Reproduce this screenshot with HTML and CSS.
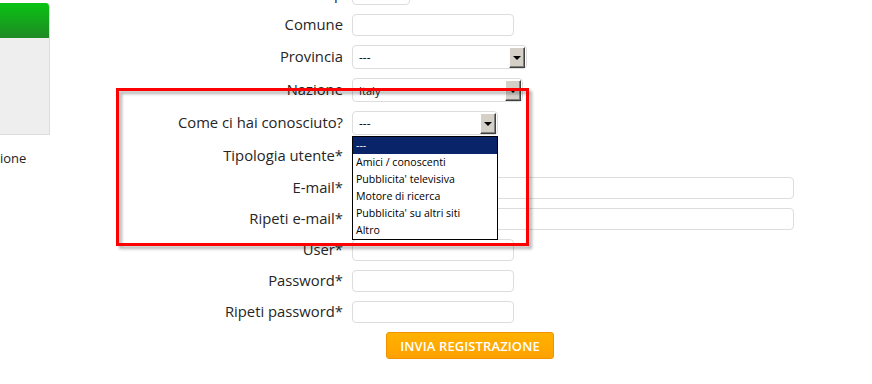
FILE: index.html
```html
<!DOCTYPE html>
<html lang="it">
<head>
  <meta charset="UTF-8" />
  <title>Registrazione</title>
  <link rel="stylesheet" href="styles.css">
</head>
<body>
  <div class="page">
    <aside class="side">
      <div class="side-box">
        <div class="side-head"></div>
        <div class="side-body"></div>
      </div>
      <p class="side-text">ione</p>
    </aside>

    <form class="reg">
      <label>Cap</label>
      <div class="field field-cap"></div>

      <label>Comune</label>
      <div class="field"></div>

      <label>Provincia</label>
      <div class="select select-wide"><span class="select-val">---</span><span class="arrow"></span></div>

      <label>Nazione</label>
      <div class="select select-nation"><span class="select-val small">Italy</span><span class="arrow"></span></div>

      <label>Come ci hai conosciuto?</label>
      <div class="select select-how"><span class="select-val">---</span><span class="arrow"></span></div>

      <label>Tipologia utente*</label>
      <div class="select select-how"><span class="select-val">---</span><span class="arrow"></span></div>

      <label>E-mail*</label>
      <div class="field field-long"></div>

      <label>Ripeti e-mail*</label>
      <div class="field field-long"></div>

      <label>User*</label>
      <div class="field"></div>

      <label>Password*</label>
      <div class="field"></div>

      <label>Ripeti password*</label>
      <div class="field"></div>

      <span></span>
      <div class="actions">
        <button type="button" class="btn-send">INVIA REGISTRAZIONE</button>
      </div>
    </form>

    <ul class="dropdown">
      <li class="on">---</li>
      <li>Amici / conoscenti</li>
      <li>Pubblicita' televisiva</li>
      <li>Motore di ricerca</li>
      <li>Pubblicita' su altri siti</li>
      <li>Altro</li>
    </ul>

    <div class="highlight"></div>
  </div>
</body>
</html>
```

FILE: styles.css
```css
* {
  box-sizing: border-box;
  margin: 0;
  padding: 0;
}

html, body {
  width: 100%;
  height: 100%;
  overflow: hidden;
  background: #fff;
  font-family: 'Open Sans', 'DejaVu Sans', sans-serif;
  color: #222;
}

.page {
  position: relative;
  display: flex;
  width: 872px;
  height: 384px;
}

/* left column */
.side {
  width: 50px;
  padding-top: 3px;
}

.side-box {
  width: 50px;
  border-radius: 0 4px 0 0;
  overflow: hidden;
  border-right: 1px solid #dcdcdc;
  border-bottom: 1px solid #dcdcdc;
}

.side-head {
  height: 35px;
  background: linear-gradient(#0ac313, #1e8a25);
}

.side-body {
  height: 96px;
  background: #eee;
}

.side-text {
  margin-top: 14px;
  font-size: 13px;
  line-height: 18px;
  color: #222;
}

/* form */
.reg {
  display: grid;
  grid-template-columns: 293px auto;
  column-gap: 9px;
  row-gap: 9px;
  align-items: center;
  align-content: start;
  margin-top: -17px;
}

.reg label {
  padding-bottom: 2px;
  text-align: right;
  font-size: 14.8px;
  line-height: 18px;
  color: #262626;
}

.field {
  width: 162px;
  height: 22px;
  border: 1px solid #ddd;
  border-radius: 4px;
  background: #fff;
}

.field-cap {
  width: 58px;
}

.field-long {
  width: 442px;
}

.select {
  position: relative;
  display: flex;
  align-items: center;
  height: 24px;
  border: 1px solid #ddd;
  border-radius: 4px;
  background: #fff;
}

.select-wide {
  width: 175px;
}

.select-nation {
  width: 171px;
}

.select-how {
  width: 146px;
}

.select-val {
  padding-left: 6px;
  font-size: 12px;
  color: #111;
}

.select-val.small {
  font-size: 11px;
}

.arrow {
  position: absolute;
  top: 1px;
  right: 1px;
  width: 16px;
  height: 21px;
  background: #d4d0c8;
  border: 1px solid;
  border-color: #fff #404040 #404040 #fff;
  box-shadow: inset -1px -1px 0 #808080;
}

.arrow::after {
  content: "";
  position: absolute;
  left: 3px;
  top: 8px;
  border-left: 4px solid transparent;
  border-right: 4px solid transparent;
  border-top: 4px solid #000;
}

.actions {
  padding-left: 34px;
}

.btn-send {
  width: 168px;
  height: 27px;
  border: 1px solid #f29200;
  border-radius: 3px;
  background: linear-gradient(#ffb200, #ffa100);
  color: #fff;
  font-family: 'Open Sans', sans-serif;
  font-size: 13px;
  font-weight: 600;
  letter-spacing: 0.1px;
}

/* open option list */
.dropdown {
  position: absolute;
  left: 352px;
  top: 136px;
  width: 146px;
  border: 1px solid #000;
  background: #fff;
  list-style: none;
}

.dropdown li {
  height: 17px;
  padding-left: 3px;
  font-size: 10.6px;
  line-height: 17px;
  color: #000;
}

.dropdown li.on {
  background: #0a246a;
  color: #fff;
}

/* annotation frame */
.highlight {
  position: absolute;
  left: 116px;
  top: 88px;
  width: 413px;
  height: 158px;
  border: 3px solid #f00;
  filter: drop-shadow(3px 3px 1.5px rgba(0, 0, 0, 0.3));
}
```
